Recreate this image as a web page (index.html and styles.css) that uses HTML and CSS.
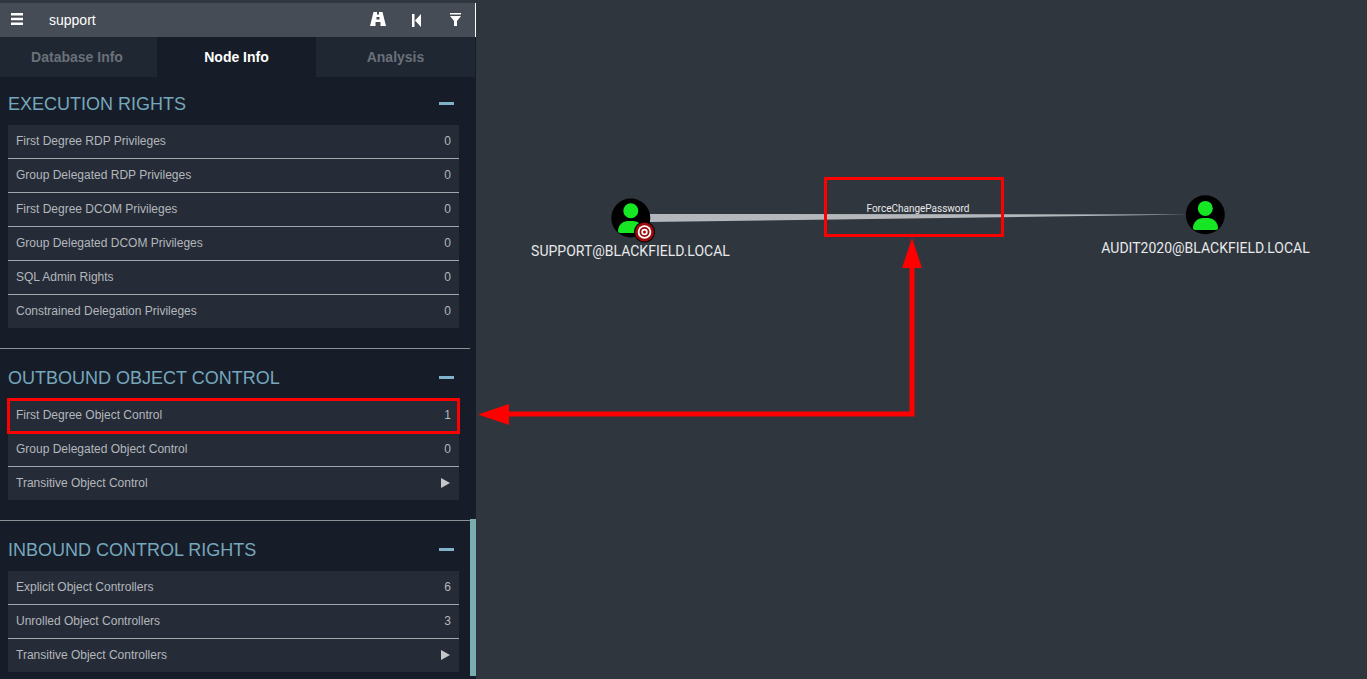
FILE: index.html
```html
<!DOCTYPE html>
<html lang="en">
  <head>
    <meta charset="UTF-8" />
    <title>BloodHound</title>
    <link rel="stylesheet" href="styles.css">
  </head>
  <body>
    <div class="sidebar">
      <div class="search-bar">
        <span class="menu-btn">
          <svg width="12" height="12" viewBox="0 0 12 12"><path d="M0 0h12v2.500H0zM0 4.700h12v2.500H0zM0 9.500h12V12H0z" fill="#fff"/></svg>
        </span>
        <span class="search-text">support</span>
        <span class="bar-icons">
          <svg class="icon-road" width="16" height="14" viewBox="0 0 16 14"><path d="M3.500 0h3.500v2.500h2V0h3.500L16 14h-5.500v-4h-5v4H0zM6.500 5h3v2.500h-3z" fill="#fff" fill-rule="evenodd"/></svg>
          <svg class="icon-back" width="9" height="13" viewBox="0 0 9 13"><path d="M0 0h2.500v13H0zM9 0v13L3 6.500z" fill="#fff"/></svg>
          <svg class="icon-filter" width="11" height="13" viewBox="0 0 11 13"><path d="M0 0h11v1.500H0zM0 3h11L7 8v5H4V8z" fill="#fff"/></svg>
        </span>
      </div>
      <div class="tabs">
        <div class="tab first">Database Info</div>
        <div class="tab active">Node Info</div>
        <div class="tab">Analysis</div>
      </div>
      <div class="panel">
        <section class="group">
          <div class="group-head"><h4>EXECUTION RIGHTS</h4><span class="collapse"></span></div>
          <div class="rows">
            <div class="row"><span>First Degree RDP Privileges</span><span>0</span></div>
            <div class="row"><span>Group Delegated RDP Privileges</span><span>0</span></div>
            <div class="row"><span>First Degree DCOM Privileges</span><span>0</span></div>
            <div class="row"><span>Group Delegated DCOM Privileges</span><span>0</span></div>
            <div class="row"><span>SQL Admin Rights</span><span>0</span></div>
            <div class="row"><span>Constrained Delegation Privileges</span><span>0</span></div>
          </div>
        </section>
        <section class="group">
          <div class="group-head"><h4>OUTBOUND OBJECT CONTROL</h4><span class="collapse"></span></div>
          <div class="rows">
            <div class="row marked"><span>First Degree Object Control</span><span>1</span></div>
            <div class="row"><span>Group Delegated Object Control</span><span>0</span></div>
            <div class="row"><span>Transitive Object Control</span><span class="play"></span></div>
          </div>
        </section>
        <section class="group">
          <div class="group-head"><h4>INBOUND CONTROL RIGHTS</h4><span class="collapse"></span></div>
          <div class="rows">
            <div class="row"><span>Explicit Object Controllers</span><span>6</span></div>
            <div class="row"><span>Unrolled Object Controllers</span><span>3</span></div>
            <div class="row"><span>Transitive Object Controllers</span><span class="play"></span></div>
          </div>
        </section>
        <div class="scroll-thumb"></div>
      </div>
    </div>

    <svg class="graph" width="1367" height="679" viewBox="0 0 1367 679">
      <!-- edge tapers from source to target -->
      <polygon points="649,214 1190,214.500 649,222" fill="#b4b8bc"/>
      <text class="edge-label" x="918" y="212" text-anchor="middle">ForceChangePassword</text>

      <circle cx="630.800" cy="218" r="19.500" fill="#000"/>
      <circle cx="630.800" cy="210.700" r="7.500" fill="#17e625"/>
      <path d="M618 231c0-6 5-10 10-10h5c5 0 10 4 10 10 0 1-1 2-2 2h-21c-1 0-2-1-2-2z" fill="#17e625"/>
      <circle cx="644.500" cy="232" r="10.500" fill="#000"/>
      <circle cx="644.500" cy="232" r="9.500" fill="#9c0a0a"/>
      <circle cx="644.500" cy="232" r="6.800" fill="#fff"/>
      <circle cx="644.500" cy="232" r="5" fill="#9c0a0a"/>
      <circle cx="644.500" cy="232" r="3.200" fill="#fff"/>
      <circle cx="644.500" cy="232" r="1.500" fill="#9c0a0a"/>
      <text class="node-label" x="630.500" y="256" text-anchor="middle">SUPPORT@BLACKFIELD.LOCAL</text>

      <circle cx="1205.300" cy="214.700" r="19.500" fill="#000"/>
      <circle cx="1205.300" cy="208.400" r="7.500" fill="#17e625"/>
      <path d="M1193 228c0-6 5-10 10-10h5c5 0 10 4 10 10 0 1-1 2-2 2h-21c-1 0-2-1-2-2z" fill="#17e625"/>
      <text class="node-label" x="1205.500" y="253" text-anchor="middle">AUDIT2020@BLACKFIELD.LOCAL</text>

      <!-- red annotations -->
      <rect x="825.500" y="178.500" width="177" height="57" fill="none" stroke="#f00" stroke-width="3"/>
      <path d="M912 262V414H505" fill="none" stroke="#f00" stroke-width="5"/>
      <polygon points="912,238 902,268 922,268" fill="#f00"/>
      <polygon points="478,414.500 509,404 509,425" fill="#f00"/>
    </svg>
  </body>
</html>
```

FILE: styles.css
```css
* {
  box-sizing: border-box;
}
html,
body {
  height: 100%;
}
body {
  margin: 0;
  background-color: #2f363e;
  font-family: "Liberation Sans", Arial, sans-serif;
  overflow: hidden;
}
.sidebar {
  width: 476px;
  height: 676px;
  margin-top: 3px;
  background-color: #161d28;
  display: flex;
  flex-direction: column;
  position: relative;
  z-index: 1;
}
.search-bar {
  height: 34px;
  background-color: #454c55;
  border-right: 1px solid #fff;
  display: flex;
  align-items: center;
  padding-left: 11px;
  color: #fff;
}
.menu-btn {
  display: flex;
  width: 38px;
  padding-bottom: 2px;
}
.search-text {
  font-size: 14px;
  flex: 1;
}
.bar-icons {
  display: flex;
  align-items: center;
  padding: 0 14px 2px 0;
}
.icon-back {
  margin: 2px 0 0 26px;
}
.icon-filter {
  margin-left: 29px;
}
.tabs {
  height: 40px;
  display: grid;
  grid-template-columns: 157px 159px 159px;
}
.tab {
  background-color: #1f2733;
  color: #6a7078;
  font-size: 14px;
  font-weight: bold;
  display: flex;
  align-items: center;
  justify-content: center;
}
.tab.first {
  padding-right: 3px;
}
.tab.active {
  background-color: #161d28;
  color: #fff;
}
.panel {
  flex: 1;
  position: relative;
  overflow: hidden;
}
.group {
  width: 470px;
  height: 272px;
  padding: 11px 11px 0 8px;
  border-bottom: 1px solid #8d9196;
}
.group + .group {
  height: 172px;
  padding-top: 13px;
}
.group:last-of-type {
  border-bottom: none;
}
.group-head {
  height: 37px;
  display: flex;
  align-items: flex-start;
  justify-content: space-between;
  padding-right: 5px;
}
.group-head h4 {
  margin: 0;
  font-size: 18px;
  line-height: 32px;
  font-weight: normal;
  color: #76a7bc;
}
.collapse {
  width: 15px;
  height: 3px;
  margin-top: 14px;
  background-color: #7fb4c8;
}
.rows {
  background-color: #252c38;
}
.row {
  height: 34px;
  padding: 0 8px 2px;
  border-bottom: 1px solid #a3a6aa;
  display: flex;
  align-items: center;
  justify-content: space-between;
  font-size: 12px;
  color: #b4b7bb;
}
.row:last-child {
  height: 33px;
  padding-bottom: 1px;
  border-bottom: none;
}
.row.marked {
  outline: 3px solid #f00;
  outline-offset: -2px;
  border-bottom: none;
}
.play {
  width: 0;
  height: 0;
  margin-right: 1px;
  border-left: 9px solid #c4c6c9;
  border-top: 5.500px solid transparent;
  border-bottom: 5.500px solid transparent;
}
.scroll-thumb {
  position: absolute;
  right: 0;
  top: 442px;
  bottom: 3px;
  width: 6px;
  background-color: #7aadb0;
}
.graph {
  position: absolute;
  left: 0;
  top: 0;
  z-index: 2;
  pointer-events: none;
}
.node-label {
  font-family: Roboto, sans-serif;
  font-size: 14px;
  fill: #e8e9ea;
}
.edge-label {
  font-family: Roboto, sans-serif;
  font-size: 10px;
  fill: #e8e9ea;
}
```
